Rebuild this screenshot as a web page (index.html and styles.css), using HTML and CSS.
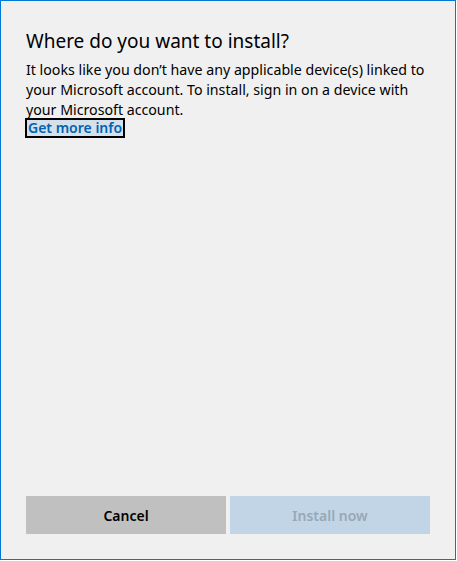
FILE: index.html
```html
<!DOCTYPE html>
<html lang="en">
<head>
<meta charset="utf-8">
<title>Where do you want to install?</title>
<link rel="stylesheet" href="styles.css">
</head>
<body>
<div class="dialog">
  <div class="content">
    <h1 class="title">Where do you want to install?</h1>
    <p class="message">It looks like you don’t have any applicable device(s) linked to your Microsoft account. To install, sign in on a device with your Microsoft account.</p>
    <a class="more-link" href="#">Get more info</a>
  </div>
  <div class="actions">
    <button class="btn btn-cancel" type="button">Cancel</button>
    <button class="btn btn-install" type="button" disabled>Install now</button>
  </div>
</div>
</body>
</html>
```
FILE: styles.css
```css
html, body {
  margin: 0;
  padding: 0;
  background: #ffffff;
}
body {
  font-family: "Noto Sans", "Open Sans", "DejaVu Sans", sans-serif;
  color: #000000;
}
.dialog {
  box-sizing: border-box;
  width: 456px;
  height: 560px;
  border: 1px solid #0078d7;
  background: #f0f0f0;
  display: flex;
  flex-direction: column;
  justify-content: space-between;
  padding: 0 25px 25px 25px;
}
.content {
  display: flex;
  flex-direction: column;
  align-items: flex-start;
}
.title {
  margin: 27px 0 0 0;
  font-size: 19px;
  font-weight: 400;
  line-height: 26px;
  color: #000000;
}
.message {
  margin: 6px 0 0 0;
  font-size: 14.2px;
  line-height: 20px;
}
.more-link {
  box-sizing: border-box;
  margin-top: -2px;
  margin-left: -1px;
  height: 20px;
  padding: 0 1px;
  border: 2px solid #000000;
  background: #d4e0ec;
  color: #0063b1;
  font-size: 14px;
  font-weight: 600;
  line-height: 16px;
  text-decoration: none;
}
.actions {
  display: flex;
  gap: 4px;
}
.btn {
  flex: 1 1 0;
  height: 38px;
  border: none;
  margin: 0;
  padding: 0;
  font-family: inherit;
  font-size: 14px;
  font-weight: 600;
}
.btn-cancel {
  background: #c0c0c0;
  color: #000000;
}
.btn-install {
  background: #c1d5e6;
  color: #98a8b6;
}
```
